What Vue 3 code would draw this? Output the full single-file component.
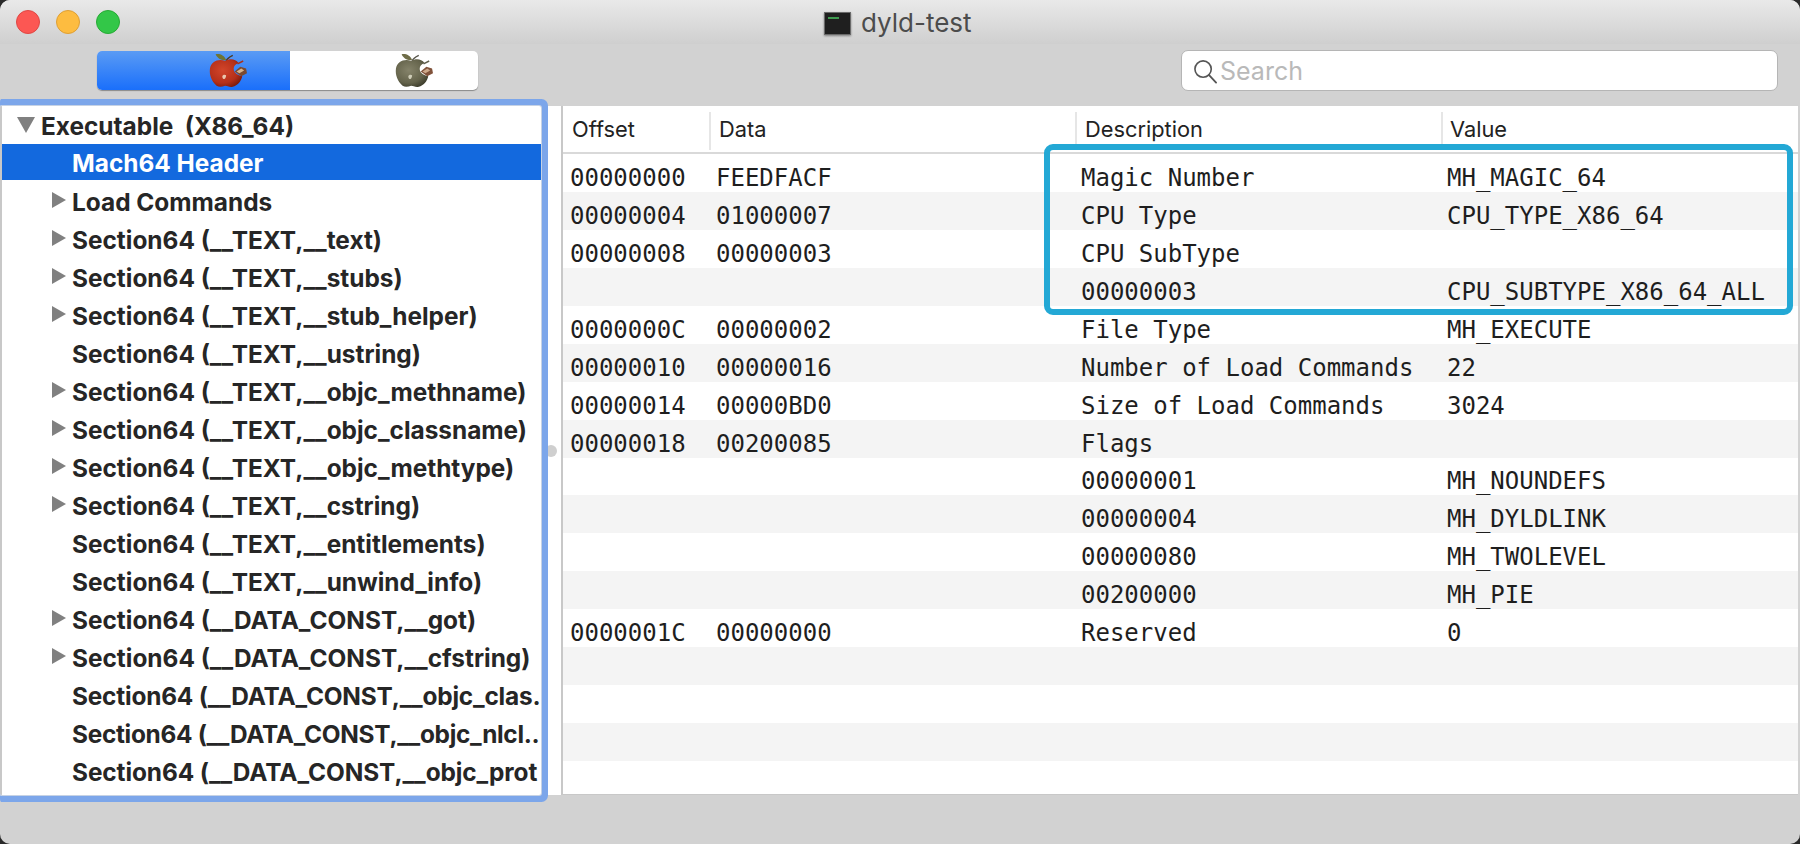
<script setup>
const outline = [
  { label: 'Executable  (X86_64)', level: 0, arrow: 'down' },
  { label: 'Mach64 Header', level: 1, selected: true },
  { label: 'Load Commands', level: 1, arrow: 'right' },
  { label: 'Section64 (__TEXT,__text)', level: 1, arrow: 'right' },
  { label: 'Section64 (__TEXT,__stubs)', level: 1, arrow: 'right' },
  { label: 'Section64 (__TEXT,__stub_helper)', level: 1, arrow: 'right' },
  { label: 'Section64 (__TEXT,__ustring)', level: 1 },
  { label: 'Section64 (__TEXT,__objc_methname)', level: 1, arrow: 'right' },
  { label: 'Section64 (__TEXT,__objc_classname)', level: 1, arrow: 'right' },
  { label: 'Section64 (__TEXT,__objc_methtype)', level: 1, arrow: 'right' },
  { label: 'Section64 (__TEXT,__cstring)', level: 1, arrow: 'right' },
  { label: 'Section64 (__TEXT,__entitlements)', level: 1 },
  { label: 'Section64 (__TEXT,__unwind_info)', level: 1 },
  { label: 'Section64 (__DATA_CONST,__got)', level: 1, arrow: 'right' },
  { label: 'Section64 (__DATA_CONST,__cfstring)', level: 1, arrow: 'right' },
  { label: 'Section64 (__DATA_CONST,__objc_clas.', level: 1, fit: 'tight' },
  { label: 'Section64 (__DATA_CONST,__objc_nlcl..', level: 1, fit: 'tighter' },
  { label: 'Section64 (__DATA_CONST,__objc_prot', level: 1, fit: 'snug' }
]

const rows = [
  ['00000000', 'FEEDFACF', 'Magic Number', 'MH_MAGIC_64'],
  ['00000004', '01000007', 'CPU Type', 'CPU_TYPE_X86_64'],
  ['00000008', '00000003', 'CPU SubType', ''],
  ['', '', '00000003', 'CPU_SUBTYPE_X86_64_ALL'],
  ['0000000C', '00000002', 'File Type', 'MH_EXECUTE'],
  ['00000010', '00000016', 'Number of Load Commands', '22'],
  ['00000014', '00000BD0', 'Size of Load Commands', '3024'],
  ['00000018', '00200085', 'Flags', ''],
  ['', '', '00000001', 'MH_NOUNDEFS'],
  ['', '', '00000004', 'MH_DYLDLINK'],
  ['', '', '00000080', 'MH_TWOLEVEL'],
  ['', '', '00200000', 'MH_PIE'],
  ['0000001C', '00000000', 'Reserved', '0'],
  ['', '', '', ''],
  ['', '', '', ''],
  ['', '', '', ''],
  ['', '', '', '']
]

const body = 'M17 8C22 5 28 6 31 10C28 11 26 13 26 16C26 20 29 23 35 24C34 29 30 34 25 35C22 36 19 34 17 34C14 35 11 36 8 34C3 30 0 23 1 16C2 9 10 5 17 8z'
</script>

<template>
  <div class="window">
    <header class="titlebar">
      <div class="lights">
        <span class="light red"></span>
        <span class="light yellow"></span>
        <span class="light green"></span>
      </div>
      <div class="title">
        <span class="term"><i></i></span>
        <span>dyld-test</span>
      </div>
    </header>

    <div class="toolbar">
      <div class="segments">
        <div class="segment active">
          <svg class="apple" viewBox="0 0 40 36">
            <defs>
              <radialGradient id="redApple" cx="0.4" cy="0.4" r="0.7">
                <stop offset="0" stop-color="#d2452a" />
                <stop offset="0.65" stop-color="#b5301a" />
                <stop offset="1" stop-color="#74180c" />
              </radialGradient>
            </defs>
            <path d="M7 1c4-1 9 1 11 6-4 1-9-1-11-6z" fill="#6d7434" />
            <path d="M18 8c1-3 3-4 7-6" fill="none" stroke="#4c3a22" stroke-width="1.4" />
            <path :d="body" fill="url(#redApple)" />
            <path d="M30 11l6-3" stroke="#a8301c" stroke-width="1.6" />
            <path d="M27 19l6-5 6 2 1 5-6 3z" fill="#7a4a30" />
            <path d="M29 19l5-3 3 2-5 3z" fill="#d8b48c" />
            <path d="M14 24c1-2 3-2 4-1 0 2-1 4-2 4-1 0-2-1-2-3z" fill="#e9c7ae" />
          </svg>
        </div>
        <div class="segment">
          <svg class="apple" viewBox="0 0 40 36">
            <defs>
              <radialGradient id="greyApple" cx="0.4" cy="0.4" r="0.7">
                <stop offset="0" stop-color="#85836a" />
                <stop offset="0.65" stop-color="#64634b" />
                <stop offset="1" stop-color="#383828" />
              </radialGradient>
            </defs>
            <path d="M7 1c4-1 9 1 11 6-4 1-9-1-11-6z" fill="#6f6d48" />
            <path d="M18 8c1-3 3-4 7-6" fill="none" stroke="#56544a" stroke-width="1.4" />
            <path :d="body" fill="url(#greyApple)" />
            <path d="M30 11l6-3" stroke="#5f5e4c" stroke-width="1.6" />
            <path d="M27 19l6-5 6 2 1 5-6 3z" fill="#80523a" />
            <path d="M29 19l5-3 3 2-5 3z" fill="#cda98a" />
            <path d="M14 24c1-2 3-2 4-1 0 2-1 4-2 4-1 0-2-1-2-3z" fill="#cfcdb8" />
          </svg>
        </div>
      </div>
      <div class="search">
        <svg class="lens" viewBox="0 0 26 26">
          <circle cx="10.5" cy="10.5" r="8.5" fill="none" stroke="#555" stroke-width="1.7" />
          <path d="M16.5 16.5l7.5 8" fill="none" stroke="#555" stroke-width="1.9" stroke-linecap="round" />
        </svg>
        <span>Search</span>
      </div>
    </div>

    <main class="content">
      <nav class="sidebar">
        <div
          v-for="item in outline"
          :key="item.label"
          class="node"
          :class="['level' + item.level, item.fit, { selected: item.selected }]"
        >
          <span v-if="item.arrow" class="arrow" :class="item.arrow"></span>
          <span class="label">{{ item.label }}</span>
        </div>
      </nav>

      <div class="divider"><span class="dot"></span></div>

      <section class="details">
        <div class="table-head">
          <div class="th col-offset">Offset</div>
          <div class="th col-data">Data</div>
          <div class="th col-desc">Description</div>
          <div class="th col-value">Value</div>
        </div>
        <div class="table-body">
          <div v-for="(row, index) in rows" :key="index" class="row">
            <span class="col-offset">{{ row[0] }}</span>
            <span class="col-data">{{ row[1] }}</span>
            <span class="col-desc">{{ row[2] }}</span>
            <span class="col-value">{{ row[3] }}</span>
          </div>
        </div>
      </section>

      <div class="callout"></div>
    </main>

    <div class="statusbar"></div>
  </div>
</template>

<style>
html, body { background: #2a2a2a; overflow: hidden; }
</style>

<style scoped>
.window {
  width: 1800px;
  height: 844px;
  display: flex;
  flex-direction: column;
  background: #d2d2d2;
  border-radius: 10px;
  overflow: hidden;
  font-family: Inter, "Liberation Sans", Arial, sans-serif;
}

.titlebar {
  height: 44px;
  flex: none;
  display: flex;
  align-items: center;
  position: relative;
  background: linear-gradient(#e9e9e9, #cfcfcf);
}
.lights { display: flex; gap: 16px; padding-left: 16px; }
.light { width: 24px; height: 24px; border-radius: 50%; box-sizing: border-box; }
.red { background: #fc5753; border: 1px solid #df4744; }
.yellow { background: #fdbc40; border: 1px solid #de9f34; }
.green { background: #33c748; border: 1px solid #27aa35; }

.title {
  position: absolute;
  left: 824px;
  top: 11px;
  display: flex;
  align-items: center;
  gap: 10px;
  font-size: 26px;
  line-height: 24px;
  color: #4c4c4c;
}
.term {
  width: 27px;
  height: 23px;
  box-sizing: border-box;
  background: #1f1f1f;
  border: 1px solid #6a6a6a;
  box-shadow: 0 1px 2px rgba(0, 0, 0, 0.4);
  padding: 4px 3px;
}
.term i { display: block; width: 11px; height: 2px; background: #3f9a50; }

.toolbar {
  height: 62px;
  flex: none;
  display: flex;
  align-items: flex-start;
  justify-content: space-between;
  padding: 7px 22px 0 97px;
  box-sizing: border-box;
}
.segments {
  width: 381px;
  height: 39px;
  display: flex;
  background: #fff;
  border-radius: 5px;
  overflow: hidden;
  box-shadow: 0 1px 1px rgba(0, 0, 0, 0.35);
}
.segment {
  flex: 1;
  display: flex;
  align-items: center;
  justify-content: center;
  padding-left: 68px;
}
.segment.active {
  flex: none;
  width: 193px;
  background: linear-gradient(#5a9bf4, #1a6ffb);
  box-sizing: border-box;
}
.segment + .segment { padding-left: 60px; }
.apple { width: 38px; height: 35px; }

.search {
  width: 597px;
  height: 41px;
  margin-top: -1px;
  box-sizing: border-box;
  background: #fff;
  border: 1px solid #b5b5b5;
  border-radius: 7px;
  display: flex;
  align-items: center;
  gap: 2px;
  padding-left: 11px;
  font-size: 25px;
  color: #b9b9b9;
}
.lens { width: 25px; height: 25px; margin-top: 2px; }

.content {
  height: 689px;
  flex: none;
  display: flex;
  position: relative;
  background: #fff;
  margin-right: 2px;
}

.sidebar {
  width: 541px;
  flex: none;
  box-sizing: border-box;
  border-left: 2px solid #c8c8c8;
  background: #fff;
  overflow: hidden;
  position: relative;
  z-index: 1;
  box-shadow: 0 0 0 1px #c6d2e4, 0 0 0 7px #7ca6ea;
  border-radius: 2px;
  clip-path: inset(-8px -8px -8px 0 round 4px);
}
.node {
  height: 38px;
  display: flex;
  align-items: center;
  position: relative;
  padding-top: 1px;
  box-sizing: border-box;
  font-size: 24.4px;
  font-weight: 700;
  color: #262626;
  white-space: pre;
}
.level0 { padding-left: 39px; }
.level1 { padding-left: 70px; }
.snug { letter-spacing: -0.08px; }
.tight { letter-spacing: -0.2px; }
.tighter { letter-spacing: -0.3px; }
.selected { background: #1369de; color: #fff; height: 36px; margin-bottom: 2px; }
.arrow { position: absolute; width: 0; height: 0; }
.arrow.down {
  left: 15px;
  top: 11px;
  border-left: 9px solid transparent;
  border-right: 9px solid transparent;
  border-top: 16px solid #808080;
}
.arrow.right {
  left: 50px;
  top: 10px;
  border-top: 8px solid transparent;
  border-bottom: 8px solid transparent;
  border-left: 14px solid #808080;
}

.divider {
  width: 20px;
  flex: none;
  display: flex;
  align-items: center;
  justify-content: center;
  padding-left: 2px;
  box-sizing: border-box;
  height: 100%;
}
.dot {
  width: 12px;
  height: 12px;
  border-radius: 50%;
  background: #cfcfcf;
  position: relative;
  left: -1px;
}

.details {
  flex: 1;
  min-width: 0;
  border-left: 2px solid #c8c8c8;
  border-bottom: 1px solid #c8c8c8;
  overflow: hidden;
  display: flex;
  flex-direction: column;
}
.table-head {
  height: 46px;
  flex: none;
  display: flex;
  border-bottom: 2px solid #d9d9d9;
  font-size: 21.8px;
  color: #222;
}
.th {
  display: flex;
  align-items: center;
  padding: 0 0 4px 8px;
  margin: 6px 0 2px;
  box-sizing: border-box;
  border-left: 2px solid #e6e6e6;
}
.th:first-child { border-left: 0; padding-left: 9px; }
.table-head .col-offset { width: 146px; }
.table-head .col-data { width: 366px; }
.table-head .col-desc { width: 366px; }
.table-head .col-value { flex: 1; padding-left: 7px; }

.table-body { flex: 1; overflow: hidden; }
.row {
  height: 37.95px;
  display: flex;
  align-items: center;
  padding-top: 10px;
  box-sizing: border-box;
  font-family: "DejaVu Sans Mono", "Liberation Mono", monospace;
  font-size: 24px;
  color: #1e1e1e;
  white-space: pre;
}
.row:nth-child(even) { background: #f4f4f4; }
.row .col-offset { width: 146px; padding-left: 7px; box-sizing: border-box; }
.row .col-data { width: 366px; padding-left: 7px; box-sizing: border-box; }
.row .col-desc { width: 366px; padding-left: 6px; box-sizing: border-box; }
.row .col-value { flex: 1; padding-left: 6px; }

.callout {
  position: absolute;
  left: 1044px;
  top: 38px;
  width: 749px;
  height: 171px;
  box-sizing: border-box;
  border: 6px solid #23a8d5;
  border-radius: 9px;
  z-index: 2;
}

.statusbar { flex: 1; }
</style>
